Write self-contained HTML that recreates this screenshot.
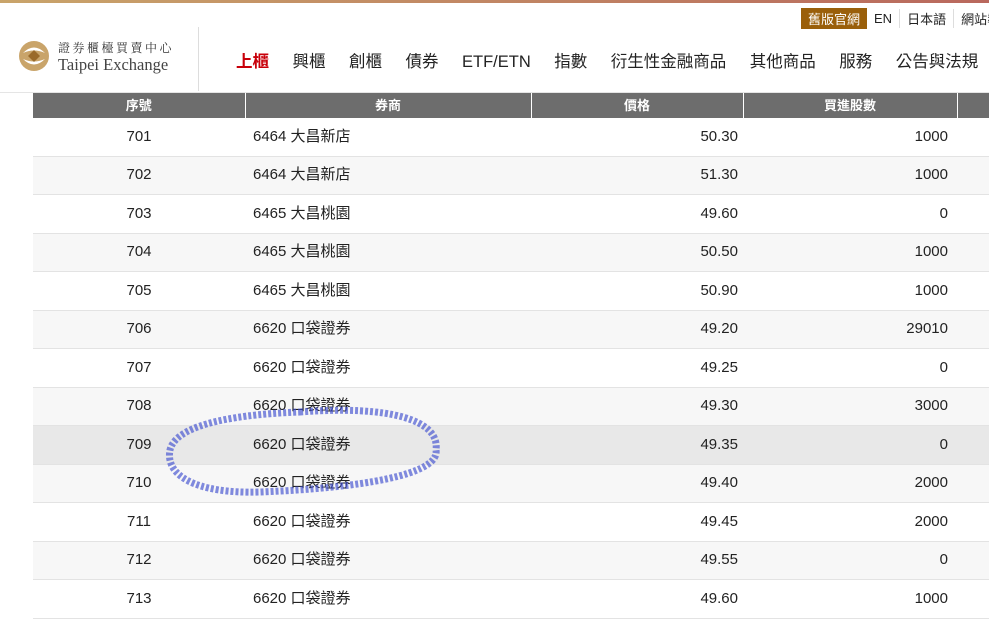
<!DOCTYPE html>
<html><head><meta charset="utf-8"><style>
body{margin:0;width:989px;height:598px;overflow:hidden;background:#fff;font-family:"Liberation Sans","Noto Sans CJK TC",sans-serif;position:relative}
.bar{position:absolute;left:0;top:0;width:989px;height:3px;background:linear-gradient(90deg,#c9a46a,#b9685d)}
.top{position:absolute;top:9px;left:801px;font-size:13px;display:flex;align-items:center;height:18px;color:#222;white-space:nowrap}
.top span{padding:0 7px;border-left:1px solid #ddd}
.top .old{background:#9a5f0a;color:#fff;padding:1px 7px;border:none}
.top .en{border:none}
.logo{position:absolute;left:18px;top:40px}
.div{position:absolute;left:198px;top:27px;width:1px;height:64px;background:#ddd}
.nav{position:absolute;top:48px;left:236px;font-size:16.5px;color:#222;white-space:nowrap}
.nav b{font-weight:normal;margin-right:23.5px}
.hline{position:absolute;top:92px;left:0;width:989px;height:1px;background:#e5e5e5}
table{position:absolute;left:33px;top:93px;border-collapse:collapse;font-size:15px;line-height:20px;color:#222;table-layout:fixed;width:964px}
th{background:#6d6d6d;color:#fff;height:25px;font-size:13px;line-height:16px;border-right:1px solid #fff;padding:0}
td{height:37.5px;border-bottom:1px solid #e3e3e3;padding:0 8px;vertical-align:middle}
tr:nth-child(odd) td{background:#f7f7f7}
tr.h td{background:#e8e8e8}
.c{text-align:center}.r{text-align:right;padding-right:5px}.s{text-align:right;padding-right:9px}
</style></head><body>
<div class="bar"></div>
<div class="top"><span class="old">舊版官網</span><span class="en">EN</span><span>日本語</span><span>網站導覽</span></div>
<div class="logo">
<svg width="32" height="32" viewBox="0 0 32 32" style="position:absolute;left:0;top:0"><circle cx="16" cy="16" r="15" fill="#c9a46a"/><path d="M5 13 Q16 2 27 13 Q16 8 5 13Z M5 19 Q16 30 27 19 Q16 24 5 19Z" fill="#fff"/><path d="M16 10 L22 16 L16 22 L10 16Z" fill="#9a6a2a"/></svg>
<div style="position:absolute;left:40px;top:-1px;font-family:'Noto Serif CJK SC',serif;font-size:12px;letter-spacing:2.5px;color:#333;white-space:nowrap">證券櫃檯買賣中心</div>
<div style="position:absolute;left:40px;top:15px;font-family:'Liberation Serif',serif;font-size:16.5px;color:#444;white-space:nowrap">Taipei Exchange</div>
</div>
<div class="div"></div>
<div class="nav"><b style="color:#c8000a;font-weight:bold">上櫃</b><b>興櫃</b><b>創櫃</b><b>債券</b><b>ETF/ETN</b><b>指數</b><b>衍生性金融商品</b><b>其他商品</b><b>服務</b><b>公告與法規</b></div>
<div class="hline"></div>
<table>
<colgroup><col style="width:212px"><col style="width:286px"><col style="width:212px"><col style="width:214px"><col style="width:40px"></colgroup>
<tr><th>序號</th><th>券商</th><th>價格</th><th>買進股數</th><th></th></tr>
<tr><td class="c">701</td><td>6464 大昌新店</td><td class="r">50.30</td><td class="s">1000</td><td></td></tr>
<tr><td class="c">702</td><td>6464 大昌新店</td><td class="r">51.30</td><td class="s">1000</td><td></td></tr>
<tr><td class="c">703</td><td>6465 大昌桃園</td><td class="r">49.60</td><td class="s">0</td><td></td></tr>
<tr><td class="c">704</td><td>6465 大昌桃園</td><td class="r">50.50</td><td class="s">1000</td><td></td></tr>
<tr><td class="c">705</td><td>6465 大昌桃園</td><td class="r">50.90</td><td class="s">1000</td><td></td></tr>
<tr><td class="c">706</td><td>6620 口袋證券</td><td class="r">49.20</td><td class="s">29010</td><td></td></tr>
<tr><td class="c">707</td><td>6620 口袋證券</td><td class="r">49.25</td><td class="s">0</td><td></td></tr>
<tr><td class="c">708</td><td>6620 口袋證券</td><td class="r">49.30</td><td class="s">3000</td><td></td></tr>
<tr class="h"><td class="c">709</td><td>6620 口袋證券</td><td class="r">49.35</td><td class="s">0</td><td></td></tr>
<tr><td class="c">710</td><td>6620 口袋證券</td><td class="r">49.40</td><td class="s">2000</td><td></td></tr>
<tr><td class="c">711</td><td>6620 口袋證券</td><td class="r">49.45</td><td class="s">2000</td><td></td></tr>
<tr><td class="c">712</td><td>6620 口袋證券</td><td class="r">49.55</td><td class="s">0</td><td></td></tr>
<tr><td class="c">713</td><td>6620 口袋證券</td><td class="r">49.60</td><td class="s">1000</td><td></td></tr>
</table>
<svg width="989" height="598" style="position:absolute;left:0;top:0">
<path d="M300 412 C390 405 440 420 436 450 C440 475 360 488 260 492 C195 494 165 475 170 450 C175 428 220 415 300 412 Z" fill="none" stroke="#3f4fd0" stroke-width="7" stroke-opacity="0.65" stroke-dasharray="3 2"/>
</svg>
</body></html>
